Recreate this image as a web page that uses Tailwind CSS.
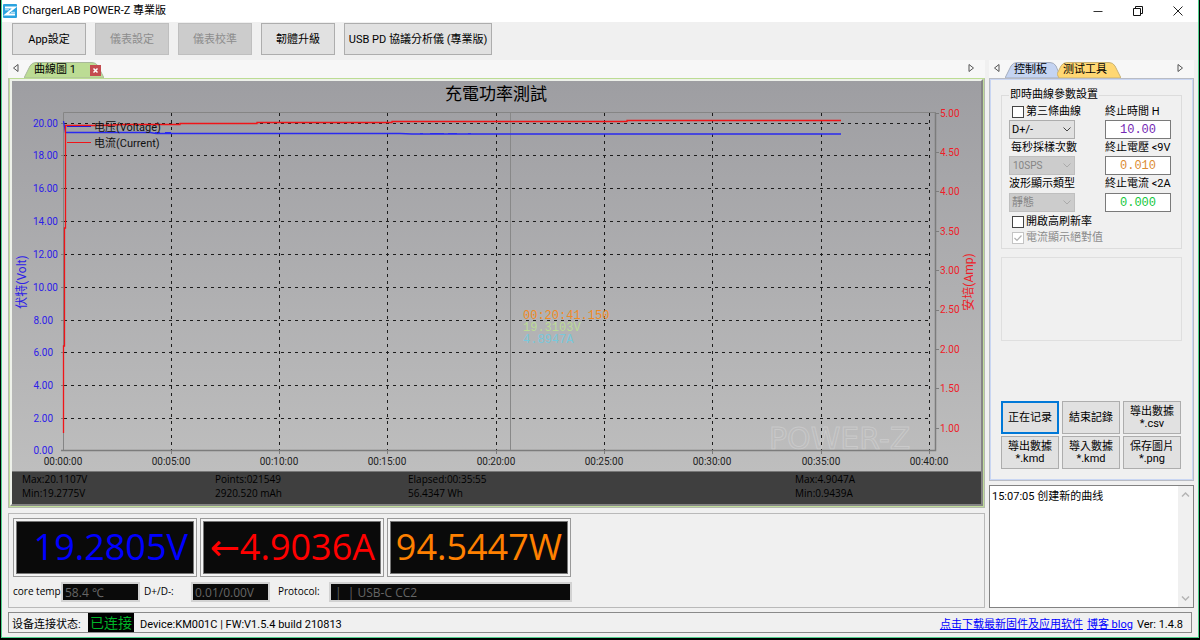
<!DOCTYPE html>
<html lang="zh-Hant">
<head>
<meta charset="utf-8">
<meta name="viewport" content="width=device-width, initial-scale=1">
<title>ChargerLAB POWER-Z 專業版</title>
<script src="https://cdn.jsdelivr.net/npm/@tailwindcss/browser@4"></script>
</head>
<body class="bg-black font-['Roboto','Noto_Sans_CJK_TC',sans-serif] text-[11px] leading-[14px] text-black">
<div class="flex min-h-screen flex-col border-x border-b-2 border-black">
<div class="flex flex-1 flex-col border-x border-b border-[#4fd08c] bg-[#f0f0f0]">

  <header class="flex h-[22px] items-center bg-white">
    <svg class="size-4" viewBox="0 0 16 16" aria-hidden="true"><rect x="1" y="1" width="14" height="14" rx="1" fill="#2ba3df"/><path d="M3 4.500H12.500L4 11.500H13" fill="none" stroke="#fff" stroke-width="2"/><path d="M3 6.800H7M9 9.300H13" fill="none" stroke="#fff" stroke-width=".8"/></svg>
    <h1 class="ml-1 flex-1">ChargerLAB POWER-Z 專業版</h1>
    <div class="flex items-center gap-[26px] pr-[13px] pb-px">
      <button aria-label="最小化"><svg class="size-[14px]" viewBox="0 0 14 14" fill="none" stroke="#333"><path d="M2.500 7.500h9"/></svg></button>
      <button aria-label="還原"><svg class="size-[14px]" viewBox="0 0 14 14" fill="none" stroke="#111"><path d="M2.500 4.500h7v7h-7zM4.500 4.500v-2h7v7h-2"/></svg></button>
      <button aria-label="關閉"><svg class="size-[14px]" viewBox="0 0 14 14" fill="none" stroke="#222"><path d="M2.500 2.500l9 9M11.500 2.500l-9 9"/></svg></button>
    </div>
  </header>

  <nav class="flex h-[38px] gap-[9px] pt-px pl-[10px]">
    <button class="h-8 w-[74px] border border-[#adadad] bg-[#e1e1e1] pt-[2px]">App設定</button>
    <button class="h-8 w-[74px] border border-[#bfbfbf] bg-[#cccccc] pt-[2px] text-[#8c8c8c]" disabled>儀表設定</button>
    <button class="h-8 w-[74px] border border-[#bfbfbf] bg-[#cccccc] pt-[2px] text-[#8c8c8c]" disabled>儀表校準</button>
    <button class="h-8 w-[74px] border border-[#adadad] bg-[#e1e1e1] pt-[2px]">韌體升級</button>
    <button class="h-8 w-[148px] border border-[#adadad] bg-[#e1e1e1] pt-[2px] whitespace-nowrap">USB PD 協議分析儀 (專業版)</button>
  </nav>

  <main class="flex flex-1 gap-1 pr-1 pl-[6px]">
    <div class="flex min-w-0 flex-1 flex-col">
      <div class="flex h-[18px] items-end bg-[#f7f7f7] pr-[9px] pl-[3px]">
        <button class="mb-1" aria-label="向左"><svg class="h-3 w-[10px]" viewBox="0 0 10 12" fill="none" stroke="#555"><path d="M7 2.500v7L2.500 6z"/></svg></button>
        <div class="relative ml-[3px] flex h-4 w-20 items-center">
          <svg class="absolute inset-0 size-full" viewBox="0 0 80 16" preserveAspectRatio="none" aria-hidden="true"><path d="M0 16L6 4Q8 .5 12 .5H68Q72 .5 74 4L80 16z" fill="#bcdc94" stroke="#a9b99a"/></svg>
          <button class="relative ml-[10px] whitespace-nowrap">曲線圖 1</button>
          <button class="relative mt-px ml-auto mr-[3px] flex size-[11px] items-center justify-center bg-[#c44b4f]" aria-label="關閉曲線圖"><svg class="size-[7px]" viewBox="0 0 7 7" stroke="#fff" stroke-width="1.500"><path d="M1.500 1.500l4 4M5.500 1.500l-4 4"/></svg></button>
        </div>
        <button class="mb-1 ml-auto" aria-label="向右"><svg class="h-3 w-[10px]" viewBox="0 0 10 12" fill="none" stroke="#555"><path d="M3 2.500v7L7.500 6z"/></svg></button>
      </div>

      <section class="border border-t-[#bcdc94] border-r-[#b4b9ae] border-b-[#b4b9ae] border-l-[#b4b9ae] bg-[#c1de9a] px-px pb-px">
        <div class="border-2 border-t-[#eef1ea] border-r-[#858585] border-b-[#858585] border-l-[#eef1ea]">
          <svg class="block h-auto w-full" viewBox="12 81 969 390" font-family="Roboto,'Noto Sans CJK SC',sans-serif" font-size="10">
            <defs><linearGradient id="bg" x1="0" y1="0" x2="0" y2="1"><stop offset="0" stop-color="#9e9ea2"/><stop offset="1" stop-color="#bebebe"/></linearGradient></defs>
            <rect x="12" y="81" width="969" height="390" fill="url(#bg)"/>
            <text x="496" y="100" text-anchor="middle" font-size="17" font-family="'Noto Sans CJK TC',sans-serif">充電功率測試</text>
            <text x="769" y="449" font-size="30" font-family="'DejaVu Sans',sans-serif" fill="none" stroke="#fff" stroke-opacity=".22">POWER-Z</text>
            <!-- grid -->
            <g fill="none" stroke="#1c1c1c" stroke-dasharray="3 4">
              <path d="M64 123.500H930M64 155.500H930M64 188.500H930M64 221.500H930M64 254.500H930M64 287.500H930M64 320.500H930M64 352.500H930M64 385.500H930M64 418.500H930"/>
              <path d="M171.500 113V451M279.500 113V451M387.500 113V451M496.500 113V451M604.500 113V451M712.500 113V451M821.500 113V451M929.500 113V451"/>
            </g>
            <path d="M63.500 451V112.500H936" fill="none" stroke="#858585"/>
            <path d="M61 450.500H935.500V113" fill="none" stroke="#7c7c7c" stroke-width="1.500"/>
            <path d="M61 123.500h3M61 155.500h3M61 188.500h3M61 221.500h3M61 254.500h3M61 287.500h3M61 320.500h3M61 352.500h3M61 385.500h3M61 418.500h3M936 113.500h3M936 152.500h3M936 191.500h3M936 231.500h3M936 270.500h3M936 310.500h3M936 349.500h3M936 388.500h3M936 428.500h3M171.500 451v3M279.500 451v3M387.500 451v3M496.500 451v3M604.500 451v3M712.500 451v3M821.500 451v3M929.500 451v3" stroke="#7c7c7c"/>
            <path d="M510.500 113V450" stroke="#888"/>
            <!-- voltage and current -->
            <path d="M63.500 121L65.500 132.500H150L156 133.500H400L412 134H841" fill="none" stroke="#2a2af0" stroke-width="1.300"/>
            <path d="M400 133.500h4M420 133.500h3M430 133.500h14M448 133.500h9M468 133.500h3M155 132.500h5M165 132.500h6" stroke="#2a2af0"/>
            <path d="M63.500 433V346H64.500V228H65.500V125.500H100L125 124.500H180V123.500H257V122.500H392V121.500H627V120.500H841" fill="none" stroke="#f01418" stroke-width="1.300"/>
            <path d="M67 126.500H91" stroke="#2a18d0"/><path d="M67 142.500H91" stroke="#f01418"/>
            <g font-size="11" fill="#111"><text x="94" y="131">电压(Voltage)</text><text x="94" y="147">电流(Current)</text></g>
            <g fill="#2d20e8" text-anchor="end">
              <text x="58" y="127">20.00</text><text x="58" y="159">18.00</text><text x="58" y="192">16.00</text><text x="58" y="225">14.00</text><text x="58" y="258">12.00</text><text x="58" y="291">10.00</text><text x="53" y="324">8.00</text><text x="53" y="356">6.00</text><text x="53" y="389">4.00</text><text x="53" y="422">2.00</text><text x="53" y="454">0.00</text>
            </g>
            <g fill="#ee1c28">
              <text x="940" y="117">5.00</text><text x="940" y="156">4.50</text><text x="940" y="195">4.00</text><text x="940" y="235">3.50</text><text x="940" y="274">3.00</text><text x="940" y="313">2.50</text><text x="940" y="353">2.00</text><text x="940" y="392">1.50</text><text x="940" y="432">1.00</text>
            </g>
            <g fill="#222" text-anchor="middle">
              <text x="63" y="465">00:00:00</text><text x="171" y="465">00:05:00</text><text x="279" y="465">00:10:00</text><text x="387" y="465">00:15:00</text><text x="496" y="465">00:20:00</text><text x="604" y="465">00:25:00</text><text x="712" y="465">00:30:00</text><text x="821" y="465">00:35:00</text><text x="929" y="465">00:40:00</text>
            </g>
            <g text-anchor="middle" font-size="12"><text transform="translate(26 282) rotate(-90)" fill="#2d20e8">伏特(Volt)</text><text transform="translate(973 282) rotate(-90)" fill="#ee1c28">安培(Amp)</text></g>
            <g font-size="12" font-family="'Liberation Mono',monospace"><text x="523" y="319" fill="#f08a24">00:20:41.150</text><text x="523" y="331" fill="#bcdc94">19.3103V</text><text x="523" y="343" fill="#78c8dc">4.8947A</text></g>
          </svg>
          <div class="grid h-[33px] grid-cols-[193px_193px_387px_1fr] items-center border-t border-[#777] bg-[#3f3f3f] pb-1 pl-[10px] font-['Open_Sans',sans-serif] text-[10px]">
            <p>Max:20.1107V<br>Min:19.2775V</p>
            <p>Points:021549<br>2920.520 mAh</p>
            <p>Elapsed:00:35:55<br>56.4347 Wh</p>
            <p>Max:4.9047A<br>Min:0.9439A</p>
          </div>
        </div>
      </section>

      <section class="mt-[5px] flex-1 border border-[#b9b9b9] pt-1 pl-1">
        <div class="flex gap-[3px] font-['Open_Sans','DejaVu_Sans',sans-serif] text-[36px] leading-[49px]">
          <div class="w-[184px] border border-[#999] bg-[#f4f4f4] p-[2px]"><output class="block border border-[#777] bg-[#0a0a0a] pr-[5px] pb-[2px] text-right whitespace-nowrap text-[#0000ff]">19.2805V</output></div>
          <div class="w-[184px] border border-[#999] bg-[#f4f4f4] p-[2px]"><output class="block border border-[#777] bg-[#0a0a0a] pr-[5px] pb-[2px] text-right whitespace-nowrap text-[#ff0000]">←4.9036A</output></div>
          <div class="w-[184px] border border-[#999] bg-[#f4f4f4] p-[2px]"><output class="block border border-[#777] bg-[#0a0a0a] pr-[5px] pb-[2px] text-right whitespace-nowrap text-[#ff8000]">94.5447W</output></div>
        </div>
        <div class="mt-[5px] flex items-center font-['Open_Sans',sans-serif] text-[10px]">
          <label for="temp" class="w-12 pb-[2px]">core temp</label>
          <input id="temp" readonly value="58.4 ℃" class="h-5 w-[79px] border-2 border-[#d2d2d2] bg-[#0a0a0a] px-[2px] text-[12px] text-[#666]">
          <label for="dpm" class="ml-1 w-[47px] pb-[2px]">D+/D-:</label>
          <input id="dpm" readonly value="0.01/0.00V" class="h-5 w-[79px] border-2 border-[#d2d2d2] bg-[#0a0a0a] px-[2px] text-[12px] text-[#666]">
          <label for="proto" class="ml-2 w-[51px] pb-[2px]">Protocol:</label>
          <input id="proto" readonly value="|  | USB-C CC2" class="h-5 w-[243px] border-2 border-[#d2d2d2] bg-[#0a0a0a] px-1 text-[12px] whitespace-pre text-[#666]">
        </div>
      </section>
    </div>

    <aside class="flex w-[205px] flex-col">
      <div class="flex h-[18px] items-end bg-[#f7f7f7] pr-[9px] pl-[3px]">
        <button class="mb-1" aria-label="向左"><svg class="h-3 w-[10px]" viewBox="0 0 10 12" fill="none" stroke="#555"><path d="M7 2.500v7L2.500 6z"/></svg></button>
        <button class="relative ml-[3px] h-4 w-14 pl-[9px] text-left"><svg class="absolute inset-0 size-full" viewBox="0 0 56 16" preserveAspectRatio="none" aria-hidden="true"><path d="M0 16L6 4Q8 .5 12 .5H45Q49 .5 51 4L56 16z" fill="#c5d4f2" stroke="#a5adbd"/></svg><span class="relative">控制板</span></button>
        <button class="relative -ml-1 h-4 w-16 pr-2"><svg class="absolute inset-0 size-full" viewBox="0 0 64 16" preserveAspectRatio="none" aria-hidden="true"><path d="M0 12L4 4Q6 .5 10 .5H52Q56 .5 58 4L64 16H2z" fill="#ffd773" stroke="#c9b377"/></svg><span class="relative">测试工具</span></button>
        <button class="mb-1 ml-auto" aria-label="向右"><svg class="h-3 w-[10px]" viewBox="0 0 10 12" fill="none" stroke="#555"><path d="M3 2.500v7L7.500 6z"/></svg></button>
      </div>
      <section class="flex h-[403px] flex-col border border-[#b9bcc4] bg-[#c9d6f3] p-px">
        <div class="flex flex-1 flex-col bg-[#f0f0f0] px-[10px] pt-2">
          <fieldset class="h-[161px] border border-[#dcdcdc] px-[7px]">
            <legend class="px-px">即時曲線參數設置</legend>
            <div class="mt-[2px] grid grid-cols-[66px_66px] gap-x-[30px]">
              <label class="flex h-4 items-center gap-[2px] pl-[3px] whitespace-nowrap"><input type="checkbox" class="size-3 shrink-0 appearance-none border border-[#444] bg-white">第三條曲線</label>
              <label for="endtime" class="flex h-4 items-center whitespace-nowrap">終止時間 H</label>
              <div class="relative"><select aria-label="第三條曲線" class="block h-[19px] w-full appearance-none border border-[#adadad] bg-[#e1e1e1] pl-[2px]"><option>D+/-</option></select><svg class="pointer-events-none absolute top-[6px] right-1 h-[7px] w-2" viewBox="0 0 8 7" fill="none" stroke="#444"><path d="M.5 1.500L4 5l3.500-3.500"/></svg></div>
              <input id="endtime" value="10.00" class="h-[19px] w-full border border-[#7a7a7a] bg-white text-center font-['Liberation_Mono',monospace] text-[12px] text-[#7428b4]">
              <label for="sps" class="flex h-[17px] items-center pl-[2px] whitespace-nowrap">每秒採樣次數</label>
              <label for="endvolt" class="flex h-[17px] items-center whitespace-nowrap">終止電壓 &lt;9V</label>
              <div class="relative"><select id="sps" disabled class="block h-[19px] w-full appearance-none border border-[#bfbfbf] bg-[#cccccc] pl-[3px] text-[10px] text-[#858585] opacity-100"><option>10SPS</option></select><svg class="pointer-events-none absolute top-[6px] right-1 h-[7px] w-2" viewBox="0 0 8 7" fill="none" stroke="#aaa"><path d="M.5 1.500L4 5l3.500-3.500"/></svg></div>
              <input id="endvolt" value="0.010" class="h-[19px] w-full border border-[#7a7a7a] bg-white text-center font-['Liberation_Mono',monospace] text-[12px] text-[#dc8c32]">
              <label for="wave" class="flex h-[18px] items-center whitespace-nowrap">波形顯示類型</label>
              <label for="endcur" class="flex h-[18px] items-center whitespace-nowrap">終止電流 &lt;2A</label>
              <div class="relative"><select id="wave" disabled class="block h-[19px] w-full appearance-none border border-[#bfbfbf] bg-[#cccccc] pl-[2px] text-[#858585] opacity-100"><option>靜態</option></select><svg class="pointer-events-none absolute top-[6px] right-1 h-[7px] w-2" viewBox="0 0 8 7" fill="none" stroke="#aaa"><path d="M.5 1.500L4 5l3.500-3.500"/></svg></div>
              <input id="endcur" value="0.000" class="h-[19px] w-full border border-[#7a7a7a] bg-white text-center font-['Liberation_Mono',monospace] text-[12px] text-[#14c83c]">
            </div>
            <label class="mt-[2px] flex h-4 items-center gap-[2px] pl-[3px]"><input type="checkbox" class="size-3 shrink-0 appearance-none border border-[#444] bg-white">開啟高刷新率</label>
            <label class="relative flex h-4 items-center gap-[2px] pl-[3px] text-[#8c8c8c]"><input type="checkbox" checked disabled class="size-3 shrink-0 appearance-none border border-[#c4c4c4] bg-white"><svg class="pointer-events-none absolute top-[2px] left-[3px] size-3" viewBox="0 0 12 12" fill="none" stroke="#b0b0b0" stroke-width="1.200"><path d="M2.500 6l2.500 2.500 4.500-5"/></svg>電流顯示絕對值</label>
          </fieldset>
          <div class="mt-2 h-[84px] border border-[#dfdfdf]"></div>
          <div class="mt-auto mb-[10px] grid grid-cols-[58px_58px_58px] gap-x-[3px] gap-y-[2px] leading-3">
            <button class="h-[33px] border-2 border-[#0078d7] bg-[#e1e1e1]">正在记录</button>
            <button class="h-[33px] border border-[#adadad] bg-[#e1e1e1]">結束記錄</button>
            <button class="h-[33px] border border-[#adadad] bg-[#e1e1e1]">導出數據<br>*.csv</button>
            <button class="h-[33px] border border-[#adadad] bg-[#e1e1e1]">導出數據<br>*.kmd</button>
            <button class="h-[33px] border border-[#adadad] bg-[#e1e1e1]">導入數據<br>*.kmd</button>
            <button class="h-[33px] border border-[#adadad] bg-[#e1e1e1]">保存圖片<br>*.png</button>
          </div>
        </div>
      </section>
      <div class="mt-1 flex flex-1 border border-[#828282] bg-white">
        <textarea readonly aria-label="日誌" class="min-w-0 flex-1 resize-none overflow-hidden pt-1 pl-[2px]">15:07:05 创建新的曲线</textarea>
        <div class="flex w-[15px] flex-col justify-between bg-[#f0f0f0] py-1">
          <button class="flex justify-center" aria-label="向上捲動"><svg class="size-[9px]" viewBox="0 0 9 9" fill="none" stroke="#b4b4b4" stroke-width="1.500"><path d="M1 6.500L4.500 3 8 6.500"/></svg></button>
          <button class="flex justify-center" aria-label="向下捲動"><svg class="size-[9px]" viewBox="0 0 9 9" fill="none" stroke="#b4b4b4" stroke-width="1.500"><path d="M1 2.500L4.500 6 8 2.500"/></svg></button>
        </div>
      </div>
    </aside>
  </main>

  <footer class="mx-[6px] mt-1 mb-1 flex h-[21px] items-center border border-[#8a8a8a] pl-[3px]">
    <span class="w-[76px] pt-1 whitespace-nowrap font-['Roboto','Noto_Sans_CJK_SC',sans-serif]">设备连接状态:</span>
    <strong class="w-[46px] bg-black pb-px text-center font-['Noto_Sans_CJK_SC',sans-serif] text-[14px] leading-[18px] font-normal whitespace-nowrap text-[#00b428]">已连接</strong>
    <span class="ml-[6px] pt-1">Device:KM001C | FW:V1.5.4 build 210813</span>
    <span class="mr-2 ml-auto flex gap-1 pt-1 font-['Roboto','Noto_Sans_CJK_SC',sans-serif]"><a href="#firmware" class="text-[#0000ff] underline">点击下载最新固件及应用软件</a><a href="#blog" class="text-[#0000ff] underline">博客 blog</a><span>Ver: 1.4.8</span></span>
  </footer>
</div>
</div>
</body>
</html>
